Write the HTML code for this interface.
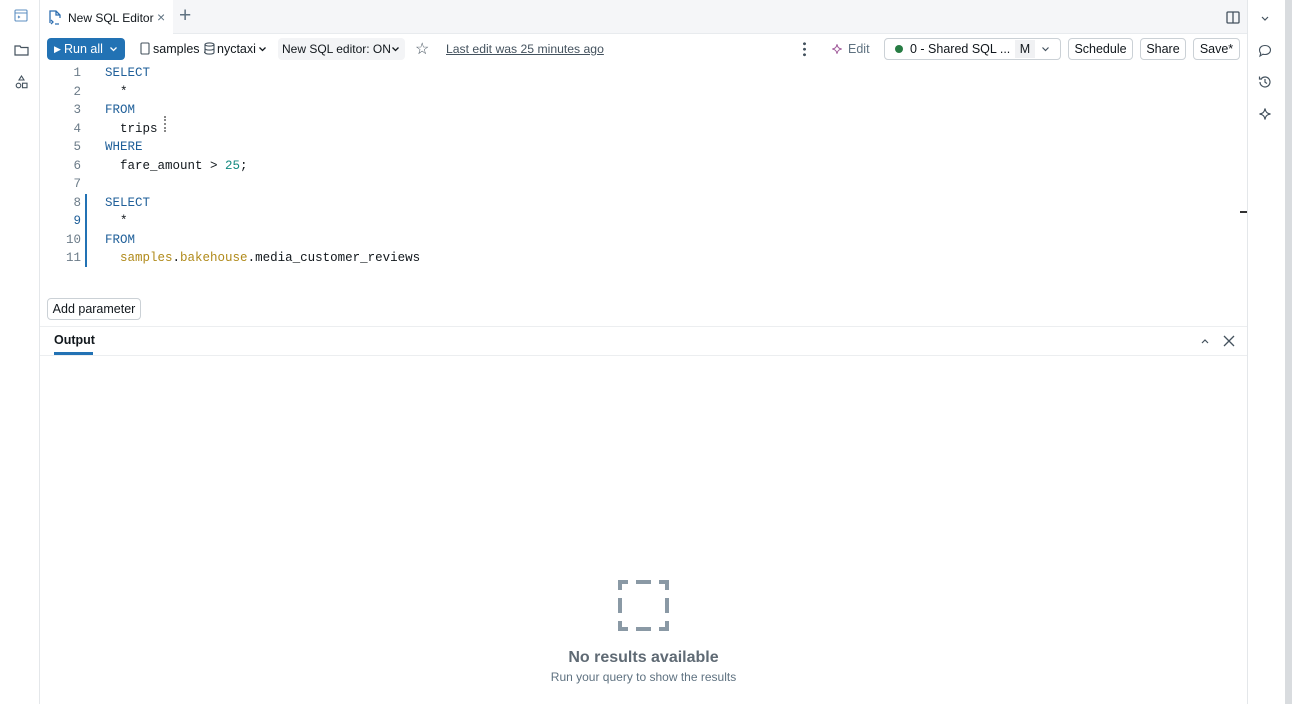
<!DOCTYPE html>
<html><head><style>
*{box-sizing:border-box;margin:0;padding:0}
body{width:1292px;height:704px;overflow:hidden;background:#fff;font-family:"Liberation Sans",sans-serif;font-size:12.5px;color:#11171c;position:relative}
.abs{position:absolute;white-space:nowrap}
.btn{position:absolute;top:38px;height:22px;border:1px solid #cbd1d6;border-radius:4px;background:#fff;font-size:12.5px;line-height:20px;text-align:center;white-space:nowrap}
.code{font-family:"Liberation Mono",monospace;font-size:12.5px}
.ln{position:absolute;left:50px;width:31px;text-align:right;color:#6b7b88}
.cl{position:absolute;left:105px;white-space:pre}
.kw{color:#1f5f99}
.num{color:#138a80}
.ident{color:#b08a1a}
</style></head><body>
<div class="abs" style="left:1285px;top:0;width:7px;height:704px;background:#d9dcdf"></div>
<div class="abs" style="left:0;top:0;width:40px;height:704px;border-right:1px solid #e4e7ea;background:#fff"></div>
<div class="abs" style="left:40px;top:0;width:1207px;height:34px;background:#f5f6f8;border-bottom:1px solid #e8ebee"></div>
<div class="abs" style="left:40px;top:0;width:133px;height:34px;background:#fff"></div>
<svg class="abs" style="left:47px;top:9px" width="16" height="17" viewBox="0 0 16 17" fill="none" stroke="#2f6fb0" stroke-width="1.3"><path d="M3 14V2h6l4 4v3M9 2v4h4"/><path d="M4 11l2 2-2 2M8 15h4"/></svg>
<div class="abs" style="left:68px;top:11px;font-size:12px">New SQL Editor</div>
<div class="abs" style="left:157px;top:9px;font-size:14px;color:#5f7281">×</div>
<div class="abs" style="left:179px;top:4px;font-size:21px;color:#5f7281;font-weight:300">+</div>
<svg class="abs" style="left:1226px;top:11px" width="14" height="13" viewBox="0 0 14 13" fill="none" stroke="#44525e" stroke-width="1.3"><rect x="1" y="1" width="12" height="11" rx="1"/><path d="M7 1v11"/></svg>
<svg class="abs" style="left:14px;top:9px" width="14" height="13" viewBox="0 0 14 13" fill="none" stroke="#5e8fc2" stroke-width="1.1"><rect x="1" y="1" width="12" height="11" rx="1"/><path d="M1 4h12M4 7l1.5 1L4 9"/></svg>
<svg class="abs" style="left:14px;top:44px" width="15" height="12" viewBox="0 0 15 12" fill="none" stroke="#44525e" stroke-width="1.2"><path d="M1 2h5l1 1.5h7V11H1z"/></svg>
<svg class="abs" style="left:15px;top:75px" width="13" height="14" viewBox="0 0 13 14" fill="none" stroke="#44525e" stroke-width="1.1"><path d="M6.5 1l2.5 4H4z"/><circle cx="3.5" cy="10.5" r="2.3"/><rect x="7.5" y="8.2" width="4.5" height="4.5"/></svg>
<div class="abs" style="left:1247px;top:0;width:1px;height:704px;background:#e4e7ea"></div>
<svg class="abs" style="left:1260px;top:15px" width="10" height="7" viewBox="0 0 10 7" fill="none" stroke="#44525e" stroke-width="1.2"><path d="M2 2l3 3 3-3"/></svg>
<svg class="abs" style="left:1258px;top:44px" width="14" height="14" viewBox="0 0 14 14" fill="none" stroke="#44525e" stroke-width="1.1"><path d="M7 1.5c3.3 0 5.5 2 5.5 4.5S10.3 10.5 7 10.5c-.8 0-1.5-.1-2.1-.3L2 12l.7-2.7C1.9 8.5 1.5 7.3 1.5 6 1.5 3.5 3.7 1.5 7 1.5z"/></svg>
<svg class="abs" style="left:1258px;top:75px" width="14" height="14" viewBox="0 0 14 14" fill="none" stroke="#44525e" stroke-width="1.2"><path d="M2 7a5 5 0 1 0 1.5-3.6M1.5 1.5v2.5H4M7 4v3.2l2 1.3"/></svg>
<svg class="abs" style="left:1258px;top:107px" width="14" height="14" viewBox="0 0 14 14" fill="none" stroke="#44525e" stroke-width="1.2"><path d="M7 1.5C7.5 5 9 6.5 12.5 7 9 7.5 7.5 9 7 12.5 6.5 9 5 7.5 1.5 7 5 6.5 6.5 5 7 1.5z"/></svg>
<div class="abs" style="left:47px;top:38px;width:78px;height:22px;background:#2272b4;border-radius:4px;color:#fff;line-height:22px"><span style="position:absolute;left:7px;font-size:9px">▶</span><span style="position:absolute;left:17px">Run all</span><svg style="position:absolute;left:62px;top:8px" width="9" height="6" viewBox="0 0 9 6" fill="none" stroke="#fff" stroke-width="1.3"><path d="M1.5 1.5l3 3 3-3"/></svg></div>
<svg class="abs" style="left:140px;top:42px" width="10" height="13" viewBox="0 0 10 13" fill="none" stroke="#44525e" stroke-width="1.1"><rect x="1" y="1" width="8" height="11" rx="1"/></svg>
<div class="abs" style="left:153px;top:42px">samples .</div>
<svg class="abs" style="left:204px;top:42px" width="11" height="13" viewBox="0 0 11 13" fill="none" stroke="#44525e" stroke-width="1.1"><ellipse cx="5.5" cy="2.5" rx="4.5" ry="1.6"/><path d="M1 2.5v8c0 .9 2 1.6 4.5 1.6s4.5-.7 4.5-1.6v-8M1 6.5c0 .9 2 1.6 4.5 1.6s4.5-.7 4.5-1.6"/></svg>
<div class="abs" style="left:217px;top:42px">nyctaxi</div>
<svg class="abs" style="left:258px;top:46px" width="9" height="6" viewBox="0 0 9 6" fill="none" stroke="#11171c" stroke-width="1.3"><path d="M1.5 1.5l3 3 3-3"/></svg>
<div class="abs" style="left:278px;top:38px;width:127px;height:22px;background:#f3f4f6;border-radius:4px;line-height:22px;padding-left:4px;font-size:12px">New SQL editor: ON</div>
<svg class="abs" style="left:391px;top:46px" width="9" height="6" viewBox="0 0 9 6" fill="none" stroke="#11171c" stroke-width="1.3"><path d="M1.5 1.5l3 3 3-3"/></svg>
<div class="abs" style="left:415px;top:39px;font-size:16px;color:#44525e">☆</div>
<div class="abs" style="left:446px;top:42px;color:#44525e;text-decoration:underline;font-size:12.2px">Last edit was 25 minutes ago</div>
<div class="abs" style="left:803px;top:41px;width:3px;height:16px;background:radial-gradient(circle,#44525e 1.3px,transparent 1.6px) 0 0/3px 5.5px"></div>
<svg class="abs" style="left:831px;top:43px" width="12" height="12" viewBox="0 0 14 14" fill="none" stroke="#a05a9a" stroke-width="1.3"><path d="M7 1.5C7.5 5 9 6.5 12.5 7 9 7.5 7.5 9 7 12.5 6.5 9 5 7.5 1.5 7 5 6.5 6.5 5 7 1.5z"/></svg>
<div class="abs" style="left:848px;top:42px;color:#5f7281">Edit</div>
<div class="btn" style="left:884px;width:177px;text-align:left"><span style="position:absolute;left:10px;top:6px;width:8px;height:8px;border-radius:50%;background:#277c43"></span><span style="position:absolute;left:25px">0 - Shared SQL ...</span><span style="position:absolute;left:130px;top:1px;width:20px;height:18px;background:#f0f1f3;line-height:18px;text-align:center">M</span><svg style="position:absolute;left:156px;top:7px" width="9" height="6" viewBox="0 0 9 6" fill="none" stroke="#44525e" stroke-width="1.2"><path d="M1.5 1.5l3 3 3-3"/></svg></div>
<div class="btn" style="left:1068px;width:65px">Schedule</div>
<div class="btn" style="left:1140px;width:46px">Share</div>
<div class="btn" style="left:1193px;width:47px">Save*</div>
<div class="code">
<div class="ln" style="top:66px">1</div><div class="cl kw" style="top:66px">SELECT</div>
<div class="ln" style="top:84.5px">2</div><div class="cl" style="top:84.5px">  *</div>
<div class="ln" style="top:103px">3</div><div class="cl kw" style="top:103px">FROM</div>
<div class="ln" style="top:121.5px">4</div><div class="cl" style="top:121.5px">  trips</div>
<div class="ln" style="top:140px">5</div><div class="cl kw" style="top:140px">WHERE</div>
<div class="ln" style="top:158.5px">6</div><div class="cl" style="top:158.5px">  fare_amount &gt; <span class="num">25</span>;</div>
<div class="ln" style="top:177px">7</div>
<div class="ln" style="top:195.5px">8</div><div class="cl kw" style="top:195.5px">SELECT</div>
<div class="ln" style="top:214px;color:#1f5f99">9</div><div class="cl" style="top:214px">  *</div>
<div class="ln" style="top:232.5px">10</div><div class="cl kw" style="top:232.5px">FROM</div>
<div class="ln" style="top:251px">11</div><div class="cl" style="top:251px">  <span class="ident">samples</span>.<span class="ident">bakehouse</span>.media_customer_reviews</div>
</div>
<div class="abs" style="left:85px;top:194px;width:2px;height:73px;background:#2272b4"></div>
<div class="abs" style="left:1240px;top:211px;width:7px;height:2px;background:#333"></div>
<div class="abs" style="left:164px;top:116px;width:5px;height:16px;border-left:2px dotted #888"></div>
<div class="abs" style="left:47px;top:298px;width:94px;height:22px;border:1px solid #cbd1d6;border-radius:4px;line-height:20px;text-align:center">Add parameter</div>
<div class="abs" style="left:40px;top:326px;width:1207px;height:1px;background:#eceef0"></div>
<div class="abs" style="left:40px;top:355px;width:1207px;height:1px;background:#eceef0"></div>
<div class="abs" style="left:54px;top:333px;font-weight:bold">Output</div>
<div class="abs" style="left:54px;top:352px;width:39px;height:3px;background:#2272b4"></div>
<svg class="abs" style="left:1200px;top:337px" width="10" height="8" viewBox="0 0 10 8" fill="none" stroke="#44525e" stroke-width="1.2"><path d="M2 6l3-3 3 3"/></svg>
<svg class="abs" style="left:1223px;top:335px" width="12" height="12" viewBox="0 0 12 12" fill="none" stroke="#44525e" stroke-width="1.3"><path d="M1 1l10 10M11 1L1 11"/></svg>
<svg class="abs" style="left:618px;top:580px" width="51" height="51" viewBox="0 0 51 51" fill="none" stroke="#8a99a5" stroke-width="4"><path d="M2 10V2h8M18 2h15M41 2h8v8M49 18v15M49 41v8h-8M33 49H18M10 49H2v-8M2 33V18"/></svg>
<div class="abs" style="left:540px;top:649px;width:207px;text-align:center;font-size:16px;font-weight:bold;color:#5f6a74">No results available</div>
<div class="abs" style="left:530px;top:670px;width:227px;text-align:center;font-size:12px;color:#5f7281">Run your query to show the results</div>
</body></html>
